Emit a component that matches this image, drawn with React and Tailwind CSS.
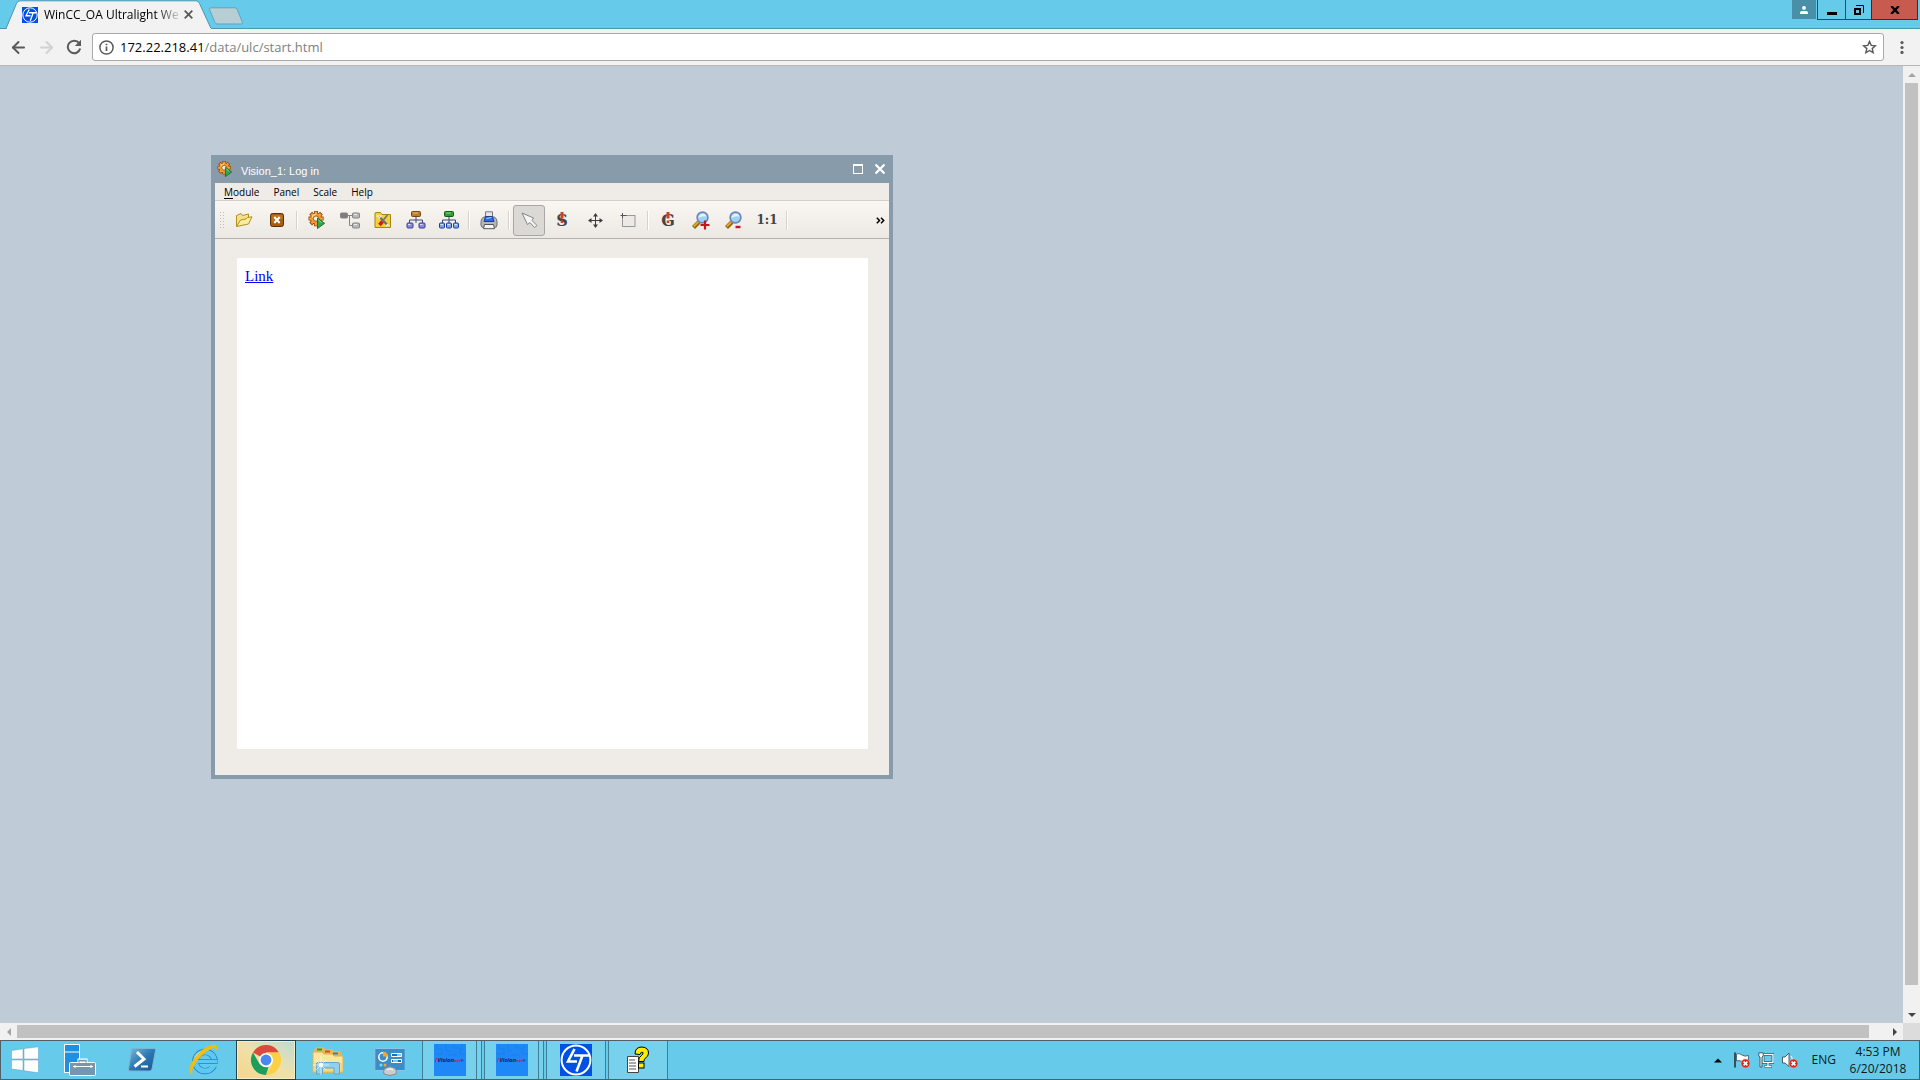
import { ArrowLeft, ArrowRight } from "lucide-react";

const uiFont = "font-['Open_Sans','Noto_Sans',sans-serif]";

function LtLogo({ className }) {
    return (
        <svg className={className} viewBox="0 0 32 32" fill="none" aria-hidden="true">
            <rect width="32" height="32" fill="#0050e6" />
            <circle cx="16" cy="16" r="14.4" stroke="#fff" strokeWidth="2" />
            <path d="M14.500 5 8 17.500H17M14 11.500H29M22.500 11.500 16.500 27.500" stroke="#fff" strokeWidth="2.600" />
        </svg>
    );
}

function TabStrip() {
    return (
        <div className="flex h-7 shrink-0 items-start bg-[#66cbea]">
            <div className="relative ml-1.5 h-[29px] w-[206px]">
                <svg className="absolute inset-0" width="206" height="29" viewBox="0 0 206 29" aria-hidden="true">
                    <path
                        d="M0 28.5 10.5 3.5Q11.5 1 14 .8H190Q192.500 1 193.500 3.500L205 28.500V29H0Z"
                        fill="#f2f2f2"
                        stroke="#4a97b2"
                    />
                    <rect x="1" y="28" width="204" height="1" fill="#f2f2f2" />
                </svg>
                <div className="relative flex h-full items-center pl-4">
                    <LtLogo className="size-4 shrink-0" />
                    <span className="ml-1.5 w-[138px] text-[12px] leading-4 whitespace-nowrap text-black [mask-image:linear-gradient(to_right,#000_82%,transparent)]">
                        WinCC_OA Ultralight We
                    </span>
                    <button type="button" aria-label="Close tab" className="flex h-4 w-3 items-center justify-center">
                        <svg width="9" height="9" viewBox="0 0 9 9" stroke="#5a5a5a" strokeWidth="1.8">
                            <path d="M.7.7l7.600 7.600M8.300.7.7 8.300" />
                        </svg>
                    </button>
                </div>
            </div>
            <button type="button" aria-label="New tab" className="-ml-1 mt-[7px]">
                <svg width="36" height="18" viewBox="0 0 36 18">
                    <path
                        d="M3.500.8H27Q28.500.8 29.200 2.500L34.500 15.500Q35 17 33 17H9Q7.500 17 7 15.500L1.500 2.500Q1 .8 3 .8Z"
                        fill="#b8ced5"
                        stroke="#5fa4bb"
                    />
                </svg>
            </button>
            <div className="mr-0.5 ml-auto flex">
                <button type="button" aria-label="Profile" className="mr-px flex h-[19px] w-6 items-center justify-center bg-[#4a8fa8]">
                    <svg width="8" height="8" viewBox="0 0 8 8" fill="#fff">
                        <circle cx="4" cy="1.900" r="1.900" />
                        <path d="M0 8V6.500Q0 5 2 5H6Q8 5 8 6.500V8Z" />
                    </svg>
                </button>
                <button
                    type="button"
                    aria-label="Minimize"
                    className="flex h-5 w-[29px] items-center justify-center border border-t-0 border-[#28505c]"
                >
                    <svg width="10" height="12" viewBox="0 0 10 12">
                        <rect y="8" width="10" height="3" />
                    </svg>
                </button>
                <button
                    type="button"
                    aria-label="Restore"
                    className="flex h-5 w-[25px] items-center justify-center border-b border-[#28505c]"
                >
                    <svg width="10" height="10" viewBox="0 0 10 10" fill="none" stroke="#000">
                        <rect x="1" y="4" width="5" height="5" strokeWidth="2" />
                        <path d="M2 .5h7.500V8" />
                    </svg>
                </button>
                <button
                    type="button"
                    aria-label="Close"
                    className="flex h-5 w-[47px] items-center justify-center border border-t-0 border-[#3e2a2c] bg-[#c75b50]"
                >
                    <svg width="10" height="8" viewBox="0 0 10 8" stroke="#000" strokeWidth="2.400">
                        <path d="M1.200 0 8.800 8M8.800 0 1.200 8" />
                    </svg>
                </button>
            </div>
        </div>
    );
}

function AddressBar() {
    return (
        <div className="flex h-[38px] shrink-0 items-center border-t border-b border-t-[#4a97b2] border-b-[#b4b6b8] bg-[#f2f2f2]">
            <button type="button" aria-label="Back" className="ml-2 flex size-5 items-center justify-center text-[#5a5a5a]">
                <ArrowLeft size={19} strokeWidth={2.5} />
            </button>
            <button type="button" aria-label="Forward" disabled className="ml-2 flex size-5 items-center justify-center text-[#d2d2d2]">
                <ArrowRight size={19} strokeWidth={2.5} />
            </button>
            <button type="button" aria-label="Reload" className="ml-2 flex size-5 items-center justify-center">
                <svg width="16" height="16" viewBox="0 0 16 16" fill="none">
                    <path d="M13.200 4.200A6.300 6.300 0 1 0 14.200 9.600" stroke="#5a5a5a" strokeWidth="2" />
                    <path d="M15 .8V7H8.800Z" fill="#5a5a5a" />
                </svg>
            </button>
            <div className="ml-2 flex h-7 flex-1 items-center rounded-[3px] border border-[#a9a9a9] bg-white px-1.5">
                <svg width="15" height="15" viewBox="0 0 15 15" fill="none" stroke="#5a5a5a" strokeWidth="1.500" aria-hidden="true">
                    <circle cx="7.500" cy="7.500" r="6.600" />
                    <path d="M7.500 6.500V11M7.500 3.800V5.300" strokeWidth="1.700" />
                </svg>
                <div className="ml-1.5 flex-1 text-[13px] leading-5 text-[#808080]">
                    <span className="text-black">172.22.218.41</span>/data/ulc/start.html
                </div>
                <button type="button" aria-label="Bookmark this page">
                    <svg width="15" height="14" viewBox="0 0 15 14" fill="none" stroke="#5a5a5a" strokeWidth="1.400">
                        <path d="M7.500 1.500 9.200 5.400 13.400 5.800 10.200 8.600 11.200 12.700 7.500 10.500 3.800 12.700 4.800 8.600 1.600 5.800 5.800 5.400Z" />
                    </svg>
                </button>
            </div>
            <button type="button" aria-label="Menu" className="mr-2 ml-2 flex w-5 justify-center">
                <svg width="4" height="13" viewBox="0 0 4 13" fill="#5a5a5a">
                    <circle cx="2" cy="1.600" r="1.600" />
                    <circle cx="2" cy="6.500" r="1.600" />
                    <circle cx="2" cy="11.400" r="1.600" />
                </svg>
            </button>
        </div>
    );
}

function OrgChart({ top, topEdge, node, nodeEdge, nodes }) {
    return (
        <svg width="20" height="18" viewBox="0 0 20 18">
            <path d="M10 6v3M3.500 12V9h13v3M10 9v3" fill="none" stroke="#3c4878" />
            <rect x="5.500" y=".5" width="9" height="5" rx="1" fill={top} stroke={topEdge} />
            <path d="M7 2h5" stroke="#fff" opacity=".5" />
            {nodes.map((x) => (
                <g key={x}>
                    <rect x={x} y="12" width={nodes.length > 2 ? 5 : 6} height="5" rx="1" fill={node} stroke={nodeEdge} />
                    <path d={`M${x + 1} 13.500h2.500`} stroke="#fff" opacity=".7" />
                </g>
            ))}
        </svg>
    );
}

function Gear({ size }) {
    return (
        <svg width={size} height={size} viewBox="0 0 18 19">
            <g stroke="#9a4a0c" strokeWidth="4.200">
                <path d="M8 0v16M0 8h16M2.300 2.300l11.400 11.400M13.700 2.300 2.300 13.700" />
            </g>
            <circle cx="8" cy="8" r="6.200" fill="#9a4a0c" />
            <g stroke="#f5a93c" strokeWidth="2.400">
                <path d="M8 .8v14.400M.8 8h14.400M3 3l10 10M13 3 3 13" />
            </g>
            <circle cx="8" cy="8" r="5.400" fill="#ef9c2e" />
            <path d="M3.800 6.500Q5 3.600 8 3.500" fill="none" stroke="#fbd98a" strokeWidth="1.300" />
            <circle cx="8" cy="8" r="2.800" fill="#f6efe2" stroke="#9a4a0c" strokeWidth=".9" />
            <path d="M9.500 7.500 17 13 9.500 18.500Z" fill="#2fa84c" stroke="#15692b" />
            <path d="M10.500 9.500 14 12.200" stroke="#8fe0a0" />
        </svg>
    );
}

function Magnifier({ minus }) {
    return (
        <svg width="18" height="19" viewBox="0 0 18 19">
            <path d="M1.500 16.500 7 11" stroke="#8a6408" strokeWidth="4.200" />
            <path d="M1.800 15.500 6.500 10.800" stroke="#dba82a" strokeWidth="2" />
            <circle cx="10.500" cy="6.500" r="5.400" fill="#9fd2f0" stroke="#6c86bd" strokeWidth="1.600" />
            <path d="M6.500 7Q7 3 11 2.800 14 3 14.500 5.500 10 4.500 6.500 7Z" fill="#e3f4fd" />
            {minus ? (
                <path d="M10.500 16h5" stroke="#c4161c" strokeWidth="2.400" />
            ) : (
                <path d="M8.500 14h9M13 9.500v9" stroke="#c4161c" strokeWidth="2.200" />
            )}
        </svg>
    );
}

function LetterMark({ letter }) {
    return (
        <svg width="18" height="18" viewBox="0 0 18 18">
            <text
                x="9"
                y="15"
                textAnchor="middle"
                fontSize="16"
                fontWeight="bold"
                fontFamily="DejaVu Serif, serif"
                fill="#454545"
            >
                {letter}
            </text>
            <path d="M9 1v6.500" stroke="#d4401f" strokeWidth="3" />
            <path d="M9 9.500v2.500" stroke="#d4401f" strokeWidth="2.500" />
        </svg>
    );
}

const tools = [
    {
        label: "Open",
        icon: (
            <svg width="18" height="16" viewBox="0 0 18 16">
                <path d="M1.500 14.500V3.500L6 1.500 7.500 3.500 13.500 2V6" fill="#f4e08a" stroke="#b18f1d" />
                <path d="M1.500 14.500 5.500 8 11 7 12.500 5.500 17 4.800 13.500 12Z" fill="#f9eca0" stroke="#b18f1d" />
            </svg>
        ),
    },
    {
        label: "Close panel",
        icon: (
            <svg width="14" height="14" viewBox="0 0 14 14">
                <rect x=".5" y=".5" width="13" height="13" rx="2" fill="#a85c0a" stroke="#5a3008" />
                <path d="M1.500 2.500Q7 1 12.500 2.500V6Q7 8 1.500 10Z" fill="#c98428" opacity=".6" />
                <path d="M4.300 4 9.700 10M9.700 4 4.300 10" stroke="#fff" strokeWidth="2" />
            </svg>
        ),
    },
    null,
    { label: "Run", icon: <Gear size={18} /> },
    {
        label: "System structure",
        icon: (
            <svg width="20" height="17" viewBox="0 0 20 17" stroke="#858585">
                <path d="M7 3.500h6M9.500 3.500v10h3" fill="none" />
                <rect x=".5" y="1" width="7" height="5" rx="1" fill="#7c7c7c" />
                <rect x="12.500" y="1" width="7" height="5" rx="1" fill="#b9b9b9" />
                <rect x="12.500" y="11" width="7" height="5" rx="1" fill="#b9b9b9" />
                <path d="M14 2.500h3M14 12.500h3" stroke="#eee" />
            </svg>
        ),
    },
    {
        label: "Settings",
        icon: (
            <svg width="18" height="18" viewBox="0 0 18 18">
                <path d="M1 16.500V2.500Q1 1.500 2 1.500H6.500L8 3.500H16.500V16.500Z" fill="#f3d13c" stroke="#a98410" />
                <path d="M2 5h6" stroke="#fbeea0" />
                <path d="M5 5.500 13.500 14" stroke="#6b6b6b" strokeWidth="2.200" />
                <path d="M13.500 4 9 9.500" stroke="#777" strokeWidth="1.800" />
                <path d="M8.500 10.500 5.500 14" stroke="#cf1e1e" strokeWidth="3.600" />
                <path d="M3.500 4.500 5.500 7 7 4.500M12 15.500l1.500-2 2 1.500" fill="none" stroke="#e8e8e8" strokeWidth="1.300" />
            </svg>
        ),
    },
    {
        label: "Panel topology",
        icon: <OrgChart top="#c07a2c" topEdge="#7a4510" node="#8d8ae0" nodeEdge="#3d3a9c" nodes={[1, 13]} />,
    },
    {
        label: "Module topology",
        icon: <OrgChart top="#2ba02b" topEdge="#0d5f10" node="#7fa8e8" nodeEdge="#1b3f9c" nodes={[0.5, 7.5, 14.5]} />,
    },
    null,
    {
        label: "Print",
        icon: (
            <svg width="18" height="19" viewBox="0 0 18 19">
                <path d="M5.500.8h7v6h-7Z" fill="#e4e6ea" stroke="#777" />
                <path d="M3.500 6H14.500Q17 8 17 10.500V14Q17 16.500 14.500 16.500H3.500Q1 16.500 1 14V10.500Q1 8 3.500 6Z" fill="#b4b6b9" stroke="#6a6d71" />
                <path d="M5.500 5.500h7l1.500 5H4Z" fill="#2f6be0" stroke="#1c3f94" />
                <path d="M6.500 7.500 11.500 6.500" stroke="#b8d4ff" />
                <path d="M4.500 13.500h9l1 4.200H3.500Z" fill="#f5f5f5" stroke="#555" />
            </svg>
        ),
    },
    null,
    {
        label: "Select",
        pressed: true,
        icon: (
            <svg width="17" height="17" viewBox="0 0 17 17">
                <path d="M1 1 12.500 6 11 8.500 16 13.500 13.500 15.500 9 10.500 6.500 12.500Z" fill="#f6f6f4" stroke="#858583" />
            </svg>
        ),
    },
    { label: "Scale symbol", icon: <LetterMark letter="S" /> },
    {
        label: "Move",
        icon: (
            <svg width="15" height="15" viewBox="0 0 15 15" stroke="#3c3c3c" fill="#3c3c3c">
                <path d="M7.500 2v11M2 7.500h11" />
                <path d="M7.500 0 10 3.500H5ZM7.500 15 10 11.500H5ZM0 7.500 3.500 5v5ZM15 7.500 11.500 5v5Z" stroke="none" />
            </svg>
        ),
    },
    {
        label: "Zoom area",
        icon: (
            <svg width="16" height="16" viewBox="0 0 16 16">
                <rect x="2.500" y="3.500" width="12.500" height="11" fill="#eceae7" stroke="#999" />
                <path d="M.5 3.500h6M2.500 1v5" stroke="#555" />
            </svg>
        ),
    },
    null,
    { label: "Reset scale", icon: <LetterMark letter="G" /> },
    { label: "Zoom in", icon: <Magnifier /> },
    { label: "Zoom out", icon: <Magnifier minus /> },
    {
        label: "Original size",
        icon: <span className="font-['DejaVu_Serif',serif] text-[12px] leading-4 font-bold text-[#444]">1:1</span>,
    },
    null,
];

function VisionWindow() {
    return (
        <section className="absolute top-[89px] left-[211px] flex h-[624px] w-[682px] flex-col bg-[#889baa] px-1 pb-1 text-black">
            <header className="flex h-7 shrink-0 items-center pr-1 pl-0.5">
                <Gear size={16} />
                <h1 className="mt-1 ml-2 flex-1 font-['Liberation_Sans',sans-serif] text-[11px] leading-4 font-normal text-white">
                    Vision_1: Log in
                </h1>
                <button type="button" aria-label="Maximize">
                    <svg width="10" height="10" viewBox="0 0 10 10" fill="none" stroke="#fff">
                        <rect x=".5" y=".5" width="9" height="9" />
                        <path d="M0 1h10" strokeWidth="2" />
                    </svg>
                </button>
                <button type="button" aria-label="Close window" className="ml-3">
                    <svg width="10" height="10" viewBox="0 0 10 10" stroke="#fff" strokeWidth="2.200">
                        <path d="M.5.5l9 9M9.500.5l-9 9" />
                    </svg>
                </button>
            </header>
            <nav className="flex h-[18px] shrink-0 items-center border-b border-[#d2d0cc] bg-[#efebe7] pl-0.5 text-[10px] leading-4">
                <button type="button" className="px-[7px]">
                    <span className="underline underline-offset-2">M</span>odule
                </button>
                <button type="button" className="px-[7px]">Panel</button>
                <button type="button" className="px-[7px]">Scale</button>
                <button type="button" className="px-[7px]">Help</button>
            </nav>
            <div
                role="toolbar"
                className="flex h-[38px] shrink-0 items-center gap-px border-b border-[#b4b1ad] bg-linear-to-b from-[#faf7f3] to-[#ece8e4] pt-px"
            >
                <svg className="mr-0.5 ml-1" width="6" height="18" viewBox="0 0 6 18" fill="#c0bdb9" aria-hidden="true">
                    {[0, 3, 6, 9, 12, 15].map((y) => (
                        <g key={y}>
                            <rect x="1" y={y + 1} width="1" height="1" />
                            <rect x="4" y={y + 1} width="1" height="1" />
                        </g>
                    ))}
                </svg>
                {tools.map((tool, index) =>
                    tool ? (
                        <button
                            key={index}
                            type="button"
                            title={tool.label}
                            aria-label={tool.label}
                            className={
                                tool.pressed
                                    ? "flex h-[31px] w-8 items-center justify-center rounded-[3px] border border-[#a9a7a4] bg-[#dbd9d6]"
                                    : "flex h-[31px] w-8 items-center justify-center"
                            }
                        >
                            {tool.icon}
                        </button>
                    ) : (
                        <span key={index} className="flex h-[19px] w-1.5 justify-center">
                            <span className="w-0.5 border-r border-l border-r-white border-l-[#d5d2ce]" />
                        </span>
                    )
                )}
                <button type="button" aria-label="More tools" className="mr-1 ml-auto">
                    <svg width="9" height="7" viewBox="0 0 9 7" fill="none" stroke="#000" strokeWidth="1.500">
                        <path d="M.8.8l2.700 2.700L.8 6.200M5 .8l2.700 2.700L5 6.200" />
                    </svg>
                </button>
            </div>
            <div className="flex flex-1 flex-col bg-[#efebe7] pt-[19px] pr-[21px] pb-[26px] pl-[22px]">
                <div className="flex-1 bg-white px-2 py-2 font-['Liberation_Serif',serif] text-[15px] leading-5">
                    <a href="#link" className="text-[#0000ee] underline">
                        Link
                    </a>
                </div>
            </div>
        </section>
    );
}

function Arrow({ dir, dim }) {
    const paths = {
        up: "M0 6 4 2 8 6Z",
        down: "M0 2 4 6 8 2Z",
        left: "M6 0 2 4 6 8Z",
        right: "M2 0 6 4 2 8Z",
    };
    return (
        <svg width="8" height="8" viewBox="0 0 8 8" fill={dim ? "#a3a3a3" : "#454545"} aria-hidden="true">
            <path d={paths[dir]} />
        </svg>
    );
}

function WindowsFlag() {
    return (
        <svg width="28" height="28" viewBox="0 0 28 28" fill="#fff" stroke="#4fa3be" strokeWidth=".5">
            <path d="M.5 4.500 12 2.800V13H.5ZM13 2.600 27.500.8V13H13ZM.5 14H12V24.500L.5 23ZM13 14H27.500V26.800L13 24.800Z" />
        </svg>
    );
}

function ServerManager() {
    return (
        <svg width="32" height="32" viewBox="0 0 32 32">
            <path d="M.5.5h15v28H.5Z" fill="#1e90df" stroke="#fff" />
            <path d="M1 8h14" stroke="#fff" />
            <rect x="5.500" y="18.500" width="26" height="13" rx="1" fill="#7796ad" stroke="#fff" />
            <path d="M15 18v-2h7v2" fill="none" stroke="#fff" strokeWidth="3" />
            <path d="M15 18.500v-2h7v2" fill="none" stroke="#7796ad" strokeWidth="1.400" />
            <path d="M9 22.500h20M11 21v3M27 21v3" stroke="#fff" />
        </svg>
    );
}

function PowerShell() {
    return (
        <svg width="30" height="26" viewBox="0 0 30 26">
            <defs>
                <linearGradient id="ps" x1="0" y1="0" x2="1" y2="1">
                    <stop offset="0" stopColor="#7fb8d8" />
                    <stop offset=".5" stopColor="#2a78b4" />
                    <stop offset="1" stopColor="#1c5590" />
                </linearGradient>
            </defs>
            <path d="M6 1.500H27Q29 1.500 28.500 3.500L25 22Q24.500 24 22.500 24H3Q1 24 1.500 22L4.500 3Q4.800 1.500 6 1.500Z" fill="url(#ps)" stroke="#7cb4d4" />
            <path d="M10 5 17 12 7.500 19.500" fill="none" stroke="#fff" strokeWidth="3" />
            <path d="M14 19.500h7" stroke="#fff" strokeWidth="2" />
        </svg>
    );
}

function Explorer() {
    return (
        <svg width="32" height="32" viewBox="0 0 32 32">
            <path d="M2 6 4 3h7l2 2h7l2 2h6l2 3v19H2Z" fill="#e0b95b" />
            <path d="M5 4.500h5v2H5Z" fill="#2b9c3a" />
            <path d="M13 6.500h5v2h-5Z" fill="#e04a1c" />
            <path d="M21 8.500h5v2h-5Z" fill="#2586cf" />
            <path d="M1 8H10L12 10H20L22 12H31V28H1Z" fill="#f9e6a0" stroke="#d8b45a" />
            <path d="M2 19H30V27H2Z" fill="#f2cf72" opacity=".6" />
            <path d="M4.500 30V20Q4.500 18.500 6 18.500H26Q27.500 18.500 27.500 20V30H22V24H10.500V30Z" fill="#8fd0ec" stroke="#5fa9cf" />
            <path d="M9 12v19M1 21h16M4 16l10 10M14 16 4 26" stroke="#fff" strokeWidth=".6" />
            <circle cx="9" cy="21" r="2" fill="#fff" />
        </svg>
    );
}

function ControlPanel() {
    return (
        <svg width="32" height="32" viewBox="0 0 32 32">
            <rect x=".8" y="4.500" width="30.400" height="22" rx="1" fill="#3c8cc8" stroke="#8cc4e6" />
            <circle cx="9" cy="13" r="4.200" fill="none" stroke="#fff" strokeWidth="1.500" />
            <path d="M9 12.500V7.500Q13.500 8 14 12.500Z" fill="#f5a623" />
            <path d="M17.500 9.500h10v3h-10ZM17.500 15.500h10v3h-10Z" fill="#1d6db0" stroke="#fff" />
            <path d="M23 11h4M19 17h5" stroke="#5fd6f6" strokeWidth="2" />
            <circle cx="7" cy="21" r="1.500" fill="#6be0f6" />
            <circle cx="11" cy="21" r="1.500" fill="#f5a623" />
            <path d="M10 30Q8.500 25 13 23.500 16 22 19 23.500 23.500 25 22 30 16 33 10 30Z" fill="#c9cdd0" stroke="#848a90" />
            <path d="M13 26Q16 23.500 19 26" fill="none" stroke="#fff" />
        </svg>
    );
}

function InternetExplorer() {
    return (
        <svg width="32" height="32" viewBox="0 0 32 32" fill="none">
            <circle cx="17" cy="17.500" r="9.600" stroke="#1c7ebc" strokeWidth="6.400" />
            <circle cx="17" cy="17.500" r="9.600" stroke="#5cc8f4" strokeWidth="5" />
            <path d="M20.500 19.500H32V22.500H20Z" fill="#66cbea" />
            <path d="M10 17.500H29.500" stroke="#1c7ebc" strokeWidth="5" />
            <path d="M10 17.500H29.500" stroke="#5cc8f4" strokeWidth="3.600" />
            <path d="M7 15Q9 8 17 7.200" stroke="#c5f0ff" strokeWidth="1.500" />
            <path d="M4 30Q0 26 5.500 17 13 6 22.500 2.200 29-.5 28.800 6 28 1.200 22 4.500 13 9.500 7 18.500 1.500 27 4 30Z" fill="#fcd116" stroke="#f0bc10" strokeWidth="1.800" />
        </svg>
    );
}

function Chrome() {
    return (
        <svg width="30" height="30" viewBox="0 0 30 30">
            <path d="M15 15 2 7.500A15 15 0 0 1 28 7.500L15 7.500Z" fill="#dc4a3e" />
            <path d="M15 7.500H28A15 15 0 0 1 15 30L21.500 18.700Z" fill="#fdd043" />
            <path d="M2 7.500 8.500 18.700Q12 23 17.500 22L15 30A15 15 0 0 1 2 7.500Z" fill="#1d9f5c" />
            <circle cx="15" cy="15" r="7" fill="#fff" />
            <circle cx="15" cy="15" r="5.400" fill="#4a88f0" />
        </svg>
    );
}

function VisionMax() {
    return (
        <span className="relative flex size-8 items-center justify-center bg-[#1e88f7]">
            <svg className="absolute inset-0" width="32" height="32" viewBox="0 0 32 32" fill="none" stroke="#1b80ea" aria-hidden="true">
                <path d="M3 0v5h5v5M12 0v7h4M20 0v4h6v6h6M28 0v6M1 10h8M14 11h9" />
            </svg>
            <span className="relative flex items-baseline font-['Open_Sans',sans-serif] text-[6px] leading-2 font-bold whitespace-nowrap text-[#1b2440] italic">
                <span className="text-[#e02030]">i</span>Vision
                <span className="text-[3px] text-[#c02040]">max</span>
                <span className="text-[4px]">®</span>
            </span>
        </span>
    );
}

function HelpDoc() {
    return (
        <svg width="24" height="28" viewBox="0 0 24 28">
            <path d="M1.500 10.500H12.500V26.500H1.500Z" fill="#fff" stroke="#444" />
            <path d="M3 14h6M3 17h7M3 20h7M3 23h7" stroke="#555" />
            <path
                d="M9 8Q9 1 16 1 22.500 1.500 22.500 7 22.500 10.500 19 12.500 18 13.500 18 15.500H12.500Q12.500 11 15.500 9.500 17.500 8 17 6.500 15 5 14 8.500Z"
                fill="#ffee00"
                stroke="#000"
            />
            <rect x="12.500" y="17" width="5.500" height="5" fill="#ffee00" stroke="#000" />
        </svg>
    );
}

function ErrorBadge() {
    return (
        <g>
            <circle cx="11.500" cy="11.500" r="4.500" fill="#d8281e" stroke="#f2b0a8" strokeWidth=".6" />
            <path d="M9.600 9.600l3.800 3.800M13.400 9.600l-3.800 3.800" stroke="#fff" strokeWidth="1.500" />
        </g>
    );
}

const pinned = [
    { label: "Server Manager", icon: <ServerManager /> },
    { label: "Windows PowerShell", icon: <PowerShell /> },
    { label: "Internet Explorer", icon: <InternetExplorer /> },
    { label: "Google Chrome", icon: <Chrome />, active: true },
    { label: "File Explorer", icon: <Explorer /> },
    { label: "Control Panel", icon: <ControlPanel /> },
];

const running = [
    { label: "iVision", icon: <VisionMax />, stacked: true },
    { label: "iVision 2", icon: <VisionMax />, stacked: true },
    { label: "Ultralight client", icon: <LtLogo className="size-8" /> },
    { label: "Help", icon: <HelpDoc /> },
];

function Taskbar() {
    return (
        <footer className="flex h-10 shrink-0 border border-[#4f6068] bg-[#66cbea]">
            <button type="button" aria-label="Start" className="flex w-12 items-center justify-center">
                <WindowsFlag />
            </button>
            {pinned.map((app) => (
                <button
                    key={app.label}
                    type="button"
                    aria-label={app.label}
                    className={
                        app.active
                            ? "mx-px -my-px flex w-[60px] items-center justify-center border border-[#24434d] bg-linear-to-tr from-[#f5d58c] via-[#f0e0a8] to-[#b8dcd8] shadow-[inset_0_0_0_1px_#f5ecc8]"
                            : "flex w-[62px] items-center justify-center"
                    }
                >
                    {app.icon}
                </button>
            ))}
            {running.map((app) => (
                <div key={app.label} className="ml-px flex w-[61px] pr-px">
                    <button
                        type="button"
                        aria-label={app.label}
                        className="flex flex-1 items-center justify-center border-r border-l border-[#3d7f94] bg-[#78d1ec]"
                    >
                        {app.icon}
                    </button>
                    {app.stacked && <span className="w-[5px] border-r border-[#3d7f94] bg-[#78d1ec]" />}
                </div>
            ))}
            <div className="ml-auto flex items-center text-[12px] text-[#0c1a20]">
                <button type="button" aria-label="Show hidden icons" className="mr-3">
                    <svg width="8" height="5" viewBox="0 0 8 5">
                        <path d="M0 4.500 4 .5 8 4.500Z" />
                    </svg>
                </button>
                <svg width="16" height="16" viewBox="0 0 16 16" fill="none" aria-label="Action Center">
                    <path d="M1 .5v15" stroke="#35505a" strokeWidth="2" />
                    <path d="M2.500 2Q5 .8 8 3 11 5 14.500 3.500V10Q11 11.500 8 9.500 5 8 2.500 9Z" fill="#fff" stroke="#35505a" strokeWidth=".8" />
                    <ErrorBadge />
                </svg>
                <svg className="ml-2" width="16" height="16" viewBox="0 0 16 16" fill="none" aria-label="Network">
                    <rect x="5" y="2.500" width="10" height="8" fill="#66cbea" stroke="#35606e" strokeWidth="3" />
                    <rect x="5" y="2.500" width="10" height="8" stroke="#fff" strokeWidth="1.300" />
                    <path d="M10 11v3M6.500 14.500h7.500" stroke="#35606e" strokeWidth="3" />
                    <path d="M10 11v3M7 14.500h6.500" stroke="#fff" strokeWidth="1.300" />
                    <path d="M.8.8H5.200V4L4 5V15H2V5L.8 4Z" fill="#fff" stroke="#35606e" />
                </svg>
                <svg className="ml-2" width="16" height="16" viewBox="0 0 16 16" fill="none" aria-label="Volume">
                    <path d="M.5 5H3L7 1V14.500L3 11H.5Z" fill="#fff" stroke="#35505a" strokeWidth=".9" />
                    <path d="M9 4q1.500 2 1.200 4" stroke="#fff" />
                    <ErrorBadge />
                </svg>
                <button type="button" className="ml-3.5">
                    ENG
                </button>
                <time className="mr-2.5 ml-3 w-[60px] text-center leading-[17px]">
                    4:53 PM
                    <br />
                    6/20/2018
                </time>
                <span className="h-full w-px" />
            </div>
        </footer>
    );
}

export default function App() {
    return (
        <div className={`flex h-screen flex-col overflow-hidden ${uiFont}`}>
            <TabStrip />
            <AddressBar />
            <div className="flex min-h-0 flex-1">
                <main className="relative flex-1 bg-[#bfccd7]">
                    <VisionWindow />
                </main>
                <div className="flex w-[17px] flex-col items-center bg-[#f1f1f1]">
                    <span className="flex h-[17px] items-center">
                        <Arrow dir="up" dim />
                    </span>
                    <span className="w-[13px] flex-1 bg-[#c1c1c1]" />
                    <span className="mt-[21px] flex h-[17px] items-center">
                        <Arrow dir="down" />
                    </span>
                </div>
            </div>
            <div className="flex h-[17px] shrink-0 items-center bg-[#f1f1f1]">
                <span className="flex w-[17px] justify-center">
                    <Arrow dir="left" dim />
                </span>
                <span className="h-[13px] flex-1 bg-[#c1c1c1]" />
                <span className="ml-[17px] flex w-[17px] justify-center">
                    <Arrow dir="right" />
                </span>
                <span className="size-[17px] bg-[#dcdcdc]" />
            </div>
            <Taskbar />
        </div>
    );
}
